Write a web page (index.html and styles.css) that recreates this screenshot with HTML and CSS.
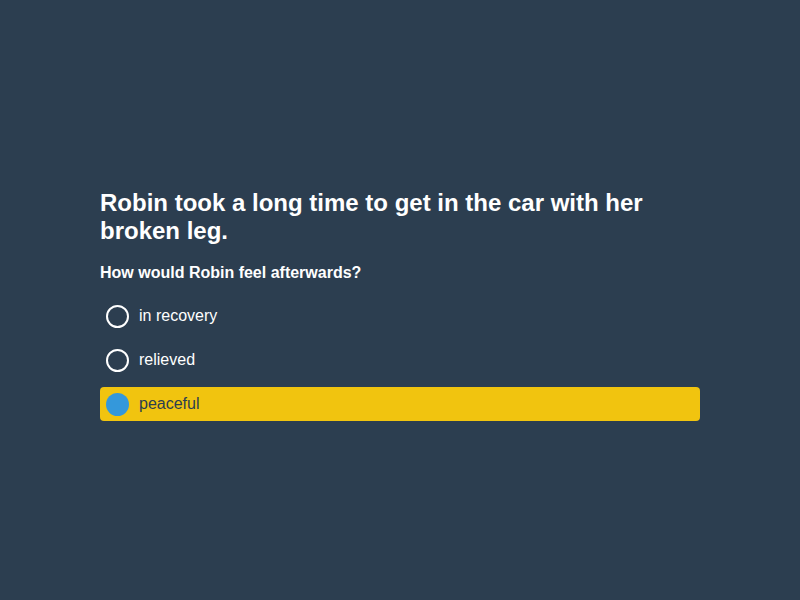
FILE: index.html
```html
<!DOCTYPE html>
<html>
<head>
<meta charset="utf-8">
<link rel="stylesheet" href="styles.css">
</head>
<body>
<main class="quiz">
  <h1 class="question">Robin took a long time to get in the car with her broken leg.</h1>
  <h2 class="prompt">How would Robin feel afterwards?</h2>
  <ul class="options">
    <li class="option"><span class="radio"></span><span class="label">in recovery</span></li>
    <li class="option"><span class="radio"></span><span class="label">relieved</span></li>
    <li class="option selected"><span class="radio"></span><span class="label">peaceful</span></li>
  </ul>
</main>
</body>
</html>
```

FILE: styles.css
```css
html, body {
  margin: 0;
  padding: 0;
  background: #2c3e50;
  height: 100%;
}
body {
  font-family: "Liberation Sans", Arial, sans-serif;
  color: #ffffff;
}
.quiz {
  width: 600px;
  margin: 0 auto;
  padding-top: 189px;
}
.question {
  margin: 0;
  font-size: 24px;
  line-height: 28px;
  font-weight: bold;
}
.prompt {
  margin: 18px 0 0;
  font-size: 16px;
  line-height: 20px;
  font-weight: bold;
}
.options {
  list-style: none;
  margin: 16px 0 0;
  padding: 0;
  display: flex;
  flex-direction: column;
  gap: 10px;
}
.option {
  display: flex;
  align-items: center;
  height: 34px;
  padding: 0 6px;
  border-radius: 4px;
  font-size: 16px;
}
.radio {
  box-sizing: border-box;
  width: 23px;
  height: 23px;
  border: 2px solid #ffffff;
  border-radius: 50%;
  margin-right: 10px;
}
.option.selected {
  background: #f1c40f;
  color: #2c3e50;
}
.option.selected .radio {
  background: #3498db;
  border: none;
}
```
